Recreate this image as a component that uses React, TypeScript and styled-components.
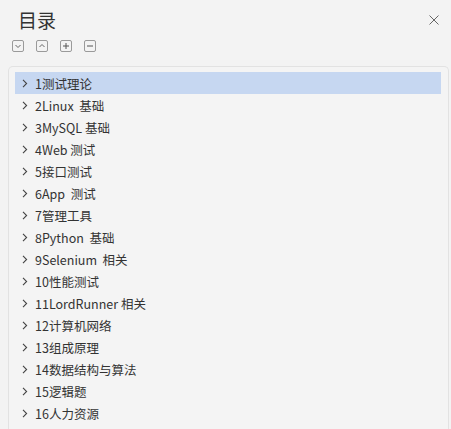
import React from "react";
import { styled, createGlobalStyle } from "styled-components";

const Global = createGlobalStyle`
  html, body {
    margin: 0;
    padding: 0;
    background: #f3f3f3;
    font-family: "Noto Sans CJK SC", "Noto Sans", sans-serif;
    color: #333;
  }
`;

const items = [
  "1测试理论",
  "2Linux  基础",
  "3MySQL 基础",
  "4Web 测试",
  "5接口测试",
  "6App  测试",
  "7管理工具",
  "8Python  基础",
  "9Selenium  相关",
  "10性能测试",
  "11LordRunner 相关",
  "12计算机网络",
  "13组成原理",
  "14数据结构与算法",
  "15逻辑题",
  "16人力资源",
];

const App = () => {
  return (
    <>
      <Global />
      <Page>
        <Header>
          <Title>目录</Title>
          <Close aria-label="close">
            <svg width="10" height="10" viewBox="0 0 10 10">
              <path d="M0.5 0.5 L9.5 9.5 M9.5 0.5 L0.5 9.5" stroke="#666" strokeWidth="1" fill="none" />
            </svg>
          </Close>
        </Header>
        <Toolbar>
          <ToolButton>
            <svg width="12" height="12" viewBox="0 0 12 12">
              <path d="M3.5 5 L6 7.5 L8.5 5" stroke="#666" fill="none" />
            </svg>
          </ToolButton>
          <ToolButton>
            <svg width="12" height="12" viewBox="0 0 12 12">
              <path d="M3.5 7 L6 4.5 L8.5 7" stroke="#666" fill="none" />
            </svg>
          </ToolButton>
          <ToolButton>
            <svg width="12" height="12" viewBox="0 0 12 12">
              <path d="M3 6 H9 M6 3 V9" stroke="#555" fill="none" />
            </svg>
          </ToolButton>
          <ToolButton>
            <svg width="12" height="12" viewBox="0 0 12 12">
              <path d="M3 6 H9" stroke="#555" fill="none" />
            </svg>
          </ToolButton>
        </Toolbar>
        <Panel>
          {items.map((t, i) => (
            <Row key={t} $active={i === 0}>
              <Chevron>
                <svg width="6" height="9" viewBox="0 0 6 9">
                  <path d="M1 0.8 L4.6 4.5 L1 8.2" stroke="#444" strokeWidth="1.1" fill="none" />
                </svg>
              </Chevron>
              <Label>{t}</Label>
            </Row>
          ))}
        </Panel>
      </Page>
    </>
  );
};

export default App;

const Page = styled.div`
  width: 451px;
  height: 429px;
  overflow: hidden;
  display: flex;
  flex-direction: column;
`;

const Header = styled.div`
  display: flex;
  align-items: center;
  justify-content: space-between;
  height: 40px;
  padding: 0 12px 0 18px;
  box-sizing: border-box;
`;

const Title = styled.div`
  font-size: 19px;
  color: #333;
  line-height: 40px;
`;

const Close = styled.div`
  width: 10px;
  height: 10px;
  display: flex;
  margin-bottom: 0;
`;

const Toolbar = styled.div`
  display: flex;
  gap: 12px;
  padding-left: 12px;
  height: 26px;
  box-sizing: border-box;
`;

const ToolButton = styled.div`
  width: 12px;
  height: 12px;
  border: 1px solid #9a9a9a;
  border-radius: 2px;
  box-sizing: border-box;
  display: flex;
  align-items: center;
  justify-content: center;
  svg {
    flex: none;
  }
`;

const Panel = styled.div`
  margin: 0 2px 0 8px;
  flex: 1;
  border: 1px solid #e2e2e2;
  border-bottom: none;
  border-radius: 5px 5px 0 0;
  background: #f4f4f4;
  padding: 5px 7px 0 6px;
  box-sizing: border-box;
`;

const Row = styled.div<{ $active?: boolean }>`
  display: flex;
  align-items: center;
  height: 22px;
  background: ${(p) => (p.$active ? "#c6d7f1" : "transparent")};
`;

const Chevron = styled.span`
  display: flex;
  width: 20px;
  padding-left: 7px;
  box-sizing: border-box;
`;

const Label = styled.span`
  font-size: 12.5px;
  white-space: pre;
  color: #333;
`;
